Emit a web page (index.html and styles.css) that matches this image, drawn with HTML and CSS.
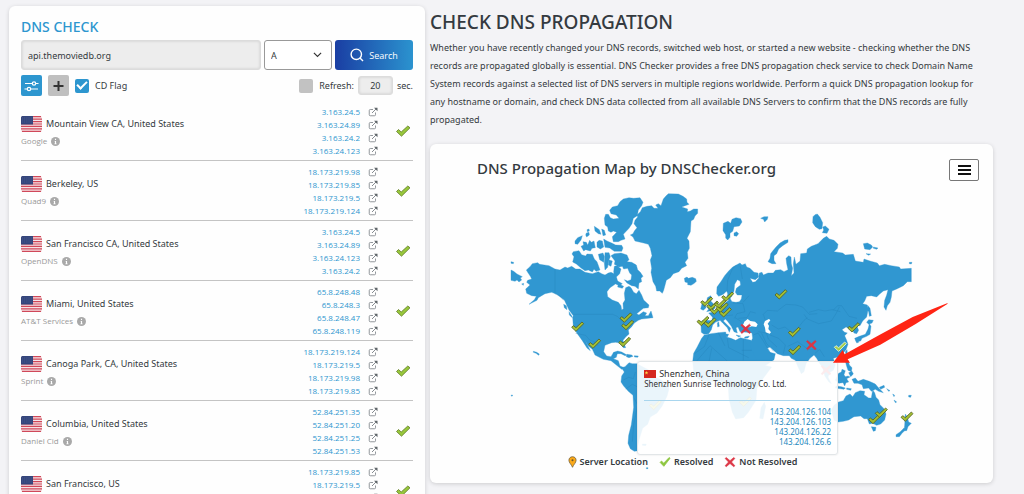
FILE: index.html
```html
<!DOCTYPE html>
<html lang="en">
    <head>
        <meta charset="UTF-8">
        <meta name="viewport" content="width=device-width, initial-scale=1">
        <title>DNS Check</title>
        <link rel="stylesheet" href="styles.css">
    </head>
    <body>
        <svg class="sprite" aria-hidden="true">
            <symbol id="flag-us" viewBox="0 0 21 16">
                <rect width="21" height="16" rx="1.5" fill="#f6e4e6"/>
                <path d="M1 .7h19M0 3.2h21M0 5.6h21M0 8h21M0 10.4h21M0 12.8h21M1 15.3h19" stroke="#d0485a" stroke-width="1.2"/>
                <path d="M1.5 0H12v8.5H0v-7A1.5 1.5 0 0 1 1.500 0z" fill="#33457b"/>
                <path d="M1 2h11M1 4h11M1 6h11" stroke="#6c7cab" stroke-width=".6" stroke-dasharray=".7 1.200"/>
            </symbol>
            <symbol id="info" viewBox="0 0 16 16">
                <circle cx="8" cy="8" r="8" fill="#a9a9a9"/>
                <path d="M6.500 7H9v4.500h1V13H6v-1.500h1V8.500h-.5zM7 3h2v2.300H7z" fill="#fff"/>
            </symbol>
            <symbol id="external" viewBox="0 0 20 20">
                <path d="M10 5H4.500Q2.500 5 2.500 7v8.500q0 2 2 2H13q2 0 2-2V11" fill="none" stroke="#868b90" stroke-width="1.800"/>
                <path d="M8 12l8.500-8.500" stroke="#868b90" stroke-width="2"/>
                <path d="M12 1.500h7v7z" fill="#5f6569"/>
            </symbol>
            <symbol id="tick" viewBox="-8 -7 16 14">
                <path d="M-6.500 .5l2-2 2.700 2.500L4.800-5l2.200 1.800L-1.500 5.200z" fill="#98c73c" stroke="#5f7b26" stroke-width=".8"/>
            </symbol>
            <symbol id="tick-map" viewBox="-21 -18 42 36">
                <path d="M-17 2l5-5 8 6L14-14l5 5L-4 14z" fill="#a3bf33" stroke="#566222" stroke-width="2.500"/>
            </symbol>
            <symbol id="tick-active" viewBox="-21 -18 42 36">
                <path d="M-17 2l5-5 8 6L14-14l5 5L-4 14z" fill="#a5cf4a" stroke="#f1f8df" stroke-width="2.500"/>
            </symbol>
            <symbol id="tick-plain" viewBox="-8 -7 16 14">
                <path d="M-6.500 .5l1.800-1.800 3 2.800L5.500-6l1.300 1L-1.500 5.800z" fill="#8dc63f" stroke="#8dc63f"/>
            </symbol>
            <symbol id="cross" viewBox="-8 -8 16 16">
                <path d="M-5-6L0-1.800 5-6 6.500-4.700 2 0 6.500 5 5 6.300 0 2-5 6.300-6.500 5-2 0-6.500-4.700z" fill="#dc3545" stroke="#dc3545" stroke-width=".8"/>
            </symbol>
        </svg>

        <main class="page">
            <section class="card checker">
                <h2 class="checker__title">DNS CHECK</h2>
                <form class="form">
                    <div class="form__row">
                        <input class="field form__host" type="text" value="api.themoviedb.org" aria-label="Host name">
                        <span class="form__type">
                            <select class="form__select" aria-label="Record type">
                                <option>A</option>
                                <option>AAAA</option>
                                <option>CNAME</option>
                                <option>MX</option>
                            </select>
                            <svg class="form__chevron" viewBox="0 0 10 6" aria-hidden="true"><path d="M1 1l4 4 4-4" fill="none" stroke="#333" stroke-width="1.300"/></svg>
                        </span>
                        <button class="form__search" type="button">
                            <svg class="form__lens" viewBox="0 0 14 14" aria-hidden="true"><circle cx="6.300" cy="6.300" r="5.200" fill="none" stroke="#fff" stroke-width="1.400"/><path d="M10 10l3 3" stroke="#fff" stroke-width="1.400"/></svg>
                            Search
                        </button>
                    </div>
                    <div class="form__row form__row--options">
                        <button class="square square--blue" type="button" aria-label="Settings">
                            <svg viewBox="0 0 15 12" aria-hidden="true"><g fill="none" stroke="#fff" stroke-width="1.200"><path d="M1 3.500h7M12 3.500h2.500M.5 9h2.500M7 9h7"/><circle cx="10" cy="3.500" r="1.700"/><circle cx="5" cy="9" r="1.700"/></g></svg>
                        </button>
                        <button class="square" type="button" aria-label="Add">
                            <svg viewBox="0 0 15 12" aria-hidden="true"><path d="M7.500 1v10M2.500 6h10" stroke="#333" stroke-width="2"/></svg>
                        </button>
                        <label class="option"><input class="option__box" type="checkbox" checked>CD Flag</label>
                        <div class="refresh">
                            <label class="option"><input class="option__box" type="checkbox">Refresh:</label>
                            <input class="field refresh__seconds" id="seconds" type="text" value="20">
                            <label for="seconds">sec.</label>
                        </div>
                    </div>
                </form>
                <ul class="servers" data-servers></ul>
            </section>

            <div class="content">
                <h1 class="content__title">CHECK DNS PROPAGATION</h1>
                <p class="content__text">Whether you have recently changed your DNS records, switched web host, or started a new website - checking whether the DNS records are propagated globally is essential. DNS Checker provides a free DNS propagation check service to check Domain Name System records against a selected list of DNS servers in multiple regions worldwide. Perform a quick DNS propagation lookup for any hostname or domain, and check DNS data collected from all available DNS Servers to confirm that the DNS records are fully propagated.</p>

                <section class="card map">
                    <header class="map__header">
                        <h2 class="map__title">DNS Propagation Map by DNSChecker.org</h2>
                        <button class="map__menu" type="button" aria-label="Map menu"><span></span><span></span><span></span></button>
                    </header>
                    <div class="map__stage">
                        <!-- three map units to a pixel -->
                        <svg class="map__svg" viewBox="18 18 1206 786" role="img" aria-label="World map">
                            <g class="land">
                                <!-- North America -->
                                <path d="M68 262L64 255 75 245 82 236 98 233 104 238 118 240 132 242 150 252 165 255 180 246 188 249 200 244 212 252 225 252 240 262 262 266 280 260 290 266 300 270 310 264 318 262 330 268 335 285 330 298 315 308 306 320 308 335 322 345 340 352 348 362 350 374 355 372 354 355 360 345 358 325 362 308 372 304 378 308 386 322 394 326 402 316 410 330 416 345 432 360 430 368 415 370 395 386 402 390 415 380 425 384 420 392 430 392 438 378 444 398 430 400 410 402 400 406 388 414 380 425 370 435 372 447 362 456 354 466 358 478 362 488 355 488 345 474 332 472 320 473 300 481 296 500 305 513 318 515 325 503 338 502 334 517 325 521 340 527 345 543 358 548 350 553 335 541 318 527 295 523 270 510 262 493 250 483 240 465 256 497 246 489 232 467 215 443 205 425 203 397 205 392 192 375 178 345 155 328 140 322 120 326 100 338 96 346 72 358 88 344 94 334 80 332 65 325 62 312 75 300 65 292 68 286 80 282 76 274z"/>
                                <path d="M18 255l8 4 10 8 16 8-6 4 4 6-8 6-6-6-6 4-12-3zM18 230l8 2-1 4-7-1zM50 297l6-2-1 6zM176 358l8 4 2 12-8-6zM192 380l8 12 2 6-9-8z"/>
                                <path d="M345 50L355 42 372 38 386 40 405 38 414 52 410 62 400 75 397 92 385 100 381 116 372 130 355 148 360 162 348 166 340 170 325 170 322 155 335 142 325 138 318 142 310 138 308 126 300 120 298 100 302 88 310 88 316 98 325 102 342 100 334 90 318 86 314 76 322 66 338 62z"/>
                                <path d="M205 200l17-3 8 12 12 4 4-6 16 1 6 14 8 8 9 25-12 4-6-6-5 8-12-6-10 2-12-8-14-12-11-6 4-16-6-8zM210 168l8-10 14-6-4 13-10 13-8-2zM228 184l8-4-2-10 10 2 4 8 6-14 5 6 8-4 4 20-10 2-5 8-14-4-6 4zM242 150l2-6 8-2 1 8-8 6zM246 134l6-2 1 6-6 2zM268 124l15 10 5 14-8-2-10-8zM290 132l8 4 4 14-8 2zM276 172l6-6 10 2 4 18-10 6-10-6zM296 162l10 6 14 6 12 6 18 1 4 8-4 10-22 0-14-10-14-2zM280 208l14-4 4 10-2 18-12-8zM300 203l12 0 4 12-6 14-2 18-8 8-2-20z"/>
                                <path d="M318 212l10-6 20-2 18 6 6 14-6 6 14 2 14 8 4 14 8 8 8 12-6 6 2 10-8 4-2 18-10-8-10-2-14-8-8-10 10 4 10-4 2-14-6-6-6-14-12 2-4-8-10 2-14-8 2-10zM328 244l8-2 12 10-4 14-10 10 4 12 14 8-8 6-14-6-8-12 6-10-2-14zM340 296l16 8-4 6-14-4zM310 224l12 4-4 16-8-4z"/>
                                <path d="M376 150L384 146 388 138 396 128 387 116 390 106 398 96 396 90 406 80 412 68 426 64 440 62 447 70 459 70 452 60 460 56 468 62 475 42 482 34 490 26 520 27 534 34 545 42 546 52 552 58 540 62 530 66 548 72 547 80 556 78 566 72 578 72 578 85 570 93 566 103 558 108 556 140 546 160 552 168 553 190 547 202 549 220 540 232 545 242 530 250 522 260 505 266 496 278 484 286 476 316 472 325 464 318 455 318 452 304 444 290 438 262 440 250 436 225 441 212 436 190 430 178 416 174 390 168 384 156z"/>
                                <path d="M538 280l8-4 4 4 12-3 10 4 2 8-6 6-10 6-10-2 0-6-8-2zM404 390l10-6 6 8-12 4zM326 502l12-4 12 3 16 9-6 2-12-6-22 0zM366 508l14 2 4 4-12 4-8-3zM388 512l12 1-2 4-10-1zM85 499l10 3 8 5-2 4-8-6-8-3zM18 630l6 1-4 3z"/>
                                <!-- South America -->
                                <path d="M350 549L360 545 372 533 382 536 396 536 410 544 430 554 446 574 470 586 490 598 492 612 486 634 471 664 456 684 436 696 428 718 413 730 406 752 402 765 398 785 400 797 388 799 376 791 369 775 371 751 379 719 386 667 384 631 370 619 356 603 348 591 350 573 358 561z"/>
                                <path d="M412 777l12 0-2 5-10-1zM424 848l5 0 0 3-5 0z"/>
                                <!-- Africa -->
                                <path d="M563 530L566 505 577 485 590 460 598 450 618 446 640 443 662 441 664 456 678 460 692 466 706 458 738 466 741 482 750 506 762 524 775 540 800 546 775 580 756 610 753 646 730 682 716 698 692 702 682 682 672 642 670 608 646 588 612 590 580 582 566 560zM768 668l10-16 4 12-8 38-10-2z"/>
                            </g>
                            <g class="land" transform="translate(555 0)">
                                <!-- Eurasia -->
                                <path d="M33 420L35 408 45 405 65 407 68 397 56 384 68 382 78 374 88 366 98 360 108 352 116 346 111 334 116 322 122 326 121 342 126 350 138 352 148 350 154 342 156 330 142 330 136 322 139 310 152 300 150 288 142 284 134 298 132 318 124 336 116 334 110 318 100 328 86 334 80 326 81 306 94 288 104 272 116 258 128 246 150 234 156 240 166 236 170 246 180 250 192 262 204 264 206 276 196 284 180 280 188 292 196 290 206 280 208 264 216 262 220 270 234 264 250 264 256 256 272 254 282 260 294 254 290 236 288 220 296 212 303 216 304 236 308 250 304 272 312 264 310 236 313 216 318 238 330 228 332 206 350 204 352 192 364 184 384 176 400 160 410 154 418 162 432 166 444 178 442 190 432 200 458 204 466 210 490 208 496 228 520 232 522 222 540 228 562 234 568 242 584 238 604 242 628 246 632 252 664 250 664 290 652 290 640 302 628 308 620 312 606 318 604 336 600 352 592 362 588 376 582 366 584 346 590 330 594 314 580 318 570 326 560 336 544 332 530 334 524 348 518 356 532 360 534 376 530 396 518 408 510 422 500 422 506 436 500 446 492 444 486 432 476 430 468 426 456 434 464 442 472 444 464 452 470 466 474 478 468 494 456 508 444 516 430 520 436 540 430 556 420 562 414 576 424 596 416 590 404 572 398 548 388 534 380 520 372 510 360 520 348 536 342 560 334 566 324 546 316 526 304 520 298 512 280 512 262 506 240 486 232 490 240 502 256 506 252 524 232 538 214 548 204 534 192 510 178 478 188 460 186 444 170 442 150 440 144 426 138 428 142 444 132 440 124 424 112 408 106 402 100 408 112 420 122 430 118 442 112 428 98 414 90 406 76 412 68 420 64 434 56 446 42 448 34 442z"/>
                                <path d="M52 338l10-6 4 8-4 8 8 8 6 12-8 8-18 4 6-8-4-4 4-8-6-8zM36 356l10-2 2 14-8 8-8-4zM82 414l4-4 2 14-5 2zM102 446l14 2-4 8-8-2zM164 456l14-3-4 6-10 1zM138 450l14 3-6 3z"/>
                                <path d="M100 115l14-6 8 6 4-12 12-5 14 3 4 10-8 12-16 2-4 14-8 6 0 12-7 8-6-6 0-10-8-12zM132 144l8-4 6 6-6 8-8-2zM212 100l10-5 12 0-2 8-8 8-4-8zM234 230l6-10 2-14 6-8 10-12 12-12 14-8 10-2 0 8-16 10-12 10-6 14-8 6 0 14 6 10-12 0zM369 95l6-6 7-2 8 10 8 16-2 18-8 2-12-8-8-12zM398 126l8-3 11 10-6 12-14-2 4-8zM520 176l12-2 12 6 4 6-8 8-16-2zM550 186l14 3-4 4-10-3zM528 206l14 1-6 4zM658 232l8 0-2 5-6-1z"/>
                                <path d="M534 362l6 8 4 22-6 2-2-14-6-8zM536 404l14 2-4 8-10 4-6-6zM538 416l5 8-3 24-10 6-14 6-4 8-14 2-4-10 14-6 18-6 8-16zM498 464l6-2 2 10-6 2zM466 500l5-6 1 10-4 6z"/>
                            </g>
                            <g class="land" transform="translate(375 465)">
                                <!-- Oceania and the islands -->
                                <path d="M646 64l8-3 4 14 8 8-2 12-10-4-4-12zM656 98l10-4 4 8-8 8zM626 100l8-4 2-8 10 4-4 12 6 10-10 14-12 2-10-10zM640 112l14-4 6 3-10 5 6 10-8 2-4 10-6-12zM618 138l16 2 12 4-4 4-26-4zM650 144l14 2-2 5-12-3zM666 118l10-4 8 10 16-6 18 6 18 8 10 12 14 14-14-4-10-6-12 6-8-10-16 2-4-12-12-4-12 0zM748 142l14-6 2 6-12 6zM770 146l10 6-4 2zM788 162l6 4-2 4zM792 180l8 6-4 2zM836 166l8 0-2 6-6-1z"/>
                                <path d="M604 210L612 196 626 186 640 182 648 168 660 162 668 170 676 158 690 152 704 154 702 164 716 174 724 174 728 150 734 158 738 172 746 180 750 194 762 206 768 222 764 240 752 252 740 256 728 250 718 252 712 236 702 236 692 228 672 230 656 240 640 244 624 246 612 240zM724 260l14 2-2 10-6 2zM826 222l6 10 4 14 8 4-10 10-4 12-8 0 2-16zM822 264l4 6-10 10-8 10-10 0 0-6 12-8z"/>
                            </g>
                            <!-- inland seas -->
                            <path class="sea" d="M714 420l4-10 10-8 8 6 14 2 8 8-4 8-14-2-12 4-12-2zM780 408l12-6 4 4-8 10 4 6-2 10 8 10-4 4-12-4-2-14-4-10z"/>
                            <!-- borders -->
                            <g class="border">
                                <path d="M150 252v74l14 6 12 14M205 388h118l14 6 14 14 18-8 10-8M212 445l30 6 12 14 16 6 10 12M355 585l16-8 14 4 6-20M362 612l20-14 20 10M388 640l10 20-12 60-4 50"/>
                                <path d="M570 505l28-20 14-36M575 528l40-46 52 46M667 460l4 28 60 30M715 462v64M740 496h-30M612 530l8-40M640 443l20 40M745 450l14-6 16 24 24 40M770 445l14 30 22 24"/>
                                <path d="M666 320l2-34 14-34 12-12M712 282l-6-38M615 385l16 18M650 370l14 22 20-2M684 354l30 2 6 24-24 6-8 14M700 400l26-2 10-18 16 4M714 352l18-20M775 388l12-12 30 2 26-20 30 2 20 6 20 22 24-2M775 388l6 18M800 420l20 12 20-6 24 20M795 450l26 10 20 20-6 26M897 388l10 14 34 14 38-8 14-22 10-20M912 382l28-8 20 4 22-4 24 6M984 376l14-14 12 0 22 32 24 6M865 446l16-20 16-20 10-8M848 484l30-14 30 22 30 2M930 505l14-12 14 22M760 440l24 4 6 18 26 24M690 398l20 12"/>
                            </g>
                            <g data-markers></g>
                        </svg>
                        <div class="tip">
                            <p class="tip__place">
                                <svg class="tip__flag" viewBox="0 0 12 8" aria-hidden="true"><rect width="12" height="8" fill="#d5281f"/><path d="M2.500 1l.5 1.300h1.300l-1 .8.4 1.300-1.200-.8-1.200.8.4-1.300-1-.8H2z" fill="#ffd84a"/></svg>
                                Shenzhen, China
                            </p>
                            <p class="tip__owner">Shenzhen Sunrise Technology Co. Ltd.</p>
                            <ul class="tip__list">
                                <li>143.204.126.104</li>
                                <li>143.204.126.103</li>
                                <li>143.204.126.22</li>
                                <li>143.204.126.6</li>
                            </ul>
                        </div>
                        <svg class="map__svg map__svg--over" viewBox="18 18 1206 786" aria-hidden="true">
                            <path d="M984 533L1013 495l6 13 104-58 100-54 105-42-1 3-95 60-106 62-98 44 7 10z" fill="#ff2414"/>
                        </svg>
                    </div>
                    <ul class="legend">
                        <li class="legend__item"><svg class="legend__pin" viewBox="0 0 9 12" aria-hidden="true"><path d="M4.500 .7C2.300.7.900 2.300.900 4.300c0 2.400 2.500 4.200 3.600 7 1.100-2.800 3.600-4.600 3.600-7C8.100 2.300 6.700.7 4.500.7z" fill="#fba919" stroke="#66552f" stroke-width=".7"/><circle cx="4.500" cy="4.200" r="1" fill="#66552f"/></svg>Server Location</li>
                        <li class="legend__item"><svg class="legend__icon" aria-hidden="true"><use href="#tick-plain"/></svg>Resolved</li>
                        <li class="legend__item"><svg class="legend__icon" aria-hidden="true"><use href="#cross"/></svg>Not Resolved</li>
                    </ul>
                </section>
            </div>
        </main>
        <script src="script.js"></script>
    </body>
</html>
```
FILE: styles.css
```css
:root{
    --blue: #2d96cf;
    --text: #343a40;
    --line: #c4c4c4;
}

*{
    box-sizing: border-box;
}

html, body{
    margin: 0;
}

body{
    background-color: #f3f3f6;
    color: var(--text);
    font-family: "Noto Sans", "Open Sans", sans-serif;
    font-size: 9px;
}

h1, h2, p, ul{
    margin: 0;
    padding: 0;
}

ul{
    list-style: none;
}

input, select, button{
    font: inherit;
    color: inherit;
}

button{
    border: 0;
    padding: 0;
    cursor: pointer;
}

.sprite{
    position: absolute;
    width: 0;
    height: 0;
}

.page{
    display: grid;
    grid-template-columns: minmax(0, 416fr) minmax(0, 563fr);
    align-items: start;
    gap: 5px;
    padding: 6px 31px 0 9px;
}

.card{
    background-color: #fefefe;
    border-radius: 6px;
    box-shadow: 0 1px 4px rgba(0, 0, 0, .16);
}

/* left card */
.checker{
    padding: 11px 12px;
}

.checker__title{
    color: var(--blue);
    font-size: 14px;
    font-weight: 500;
    line-height: 20px;
}

.form{
    margin-top: 3px;
}

.form__row{
    display: flex;
    align-items: center;
    gap: 3px;
}

.form__row--options{
    gap: 6px;
    margin-top: 5px;
}

.field{
    min-width: 0;
    border: 1px solid #dcdcdc;
    border-radius: 3px;
    background-color: #ededed;
    box-shadow: inset 0 0 3px rgba(0, 0, 0, .15);
}

.form__host{
    flex: 1;
    height: 30px;
    padding: 0 6px;
}

.form__type{
    display: grid;
    align-items: center;
    width: 68px;
}

.form__select{
    grid-area: 1 / 1;
    appearance: none;
    width: 100%;
    height: 30px;
    padding: 0 6px;
    border: 1px solid #999;
    border-radius: 3px;
    background-color: #fff;
}

.form__chevron{
    grid-area: 1 / 1;
    justify-self: end;
    width: 9px;
    margin-right: 10px;
    pointer-events: none;
}

.form__search{
    display: flex;
    align-items: center;
    justify-content: center;
    gap: 5px;
    width: 78px;
    height: 30px;
    border-radius: 3px;
    background-image: linear-gradient(90deg, #1a3ea3, #2b93cf);
    color: #fff;
    font-family: "Open Sans", sans-serif;
}

.form__lens{
    width: 14px;
    height: 14px;
}

.square{
    display: grid;
    place-items: center;
    width: 21px;
    height: 21px;
    border-radius: 2px;
    background-color: #bfbfbf;
}

.square svg{
    width: 15px;
    height: 12px;
}

.square--blue{
    background-color: var(--blue);
}

.option{
    display: flex;
    align-items: center;
    gap: 6px;
}

.option__box{
    appearance: none;
    display: grid;
    place-items: center;
    width: 14px;
    height: 14px;
    margin: 0;
    border-radius: 2px;
    background-color: #c2c2c2;
}

.option__box:checked{
    background-color: var(--blue);
}

.option__box:checked::before{
    content: "";
    width: 8px;
    height: 4px;
    margin-bottom: 3px;
    border: solid #fff;
    border-width: 0 0 2px 2px;
    rotate: -45deg;
}

.refresh{
    display: flex;
    align-items: center;
    gap: 4px;
    margin-left: auto;
}

.refresh__seconds{
    width: 35px;
    height: 19px;
    padding: 0;
    text-align: center;
}

.servers{
    margin-top: 5px;
}

.server{
    display: flex;
    align-items: center;
    padding: 4px 0 3px;
    border-bottom: 1px solid var(--line);
}

.server__info{
    flex: 1;
}

.server__place{
    display: flex;
    align-items: center;
    gap: 4px;
    padding-top: 1px;
    line-height: 18px;
}

.server__flag{
    width: 21px;
    height: 16px;
}

.server__owner{
    display: flex;
    align-items: center;
    gap: 4px;
    margin-top: 1px;
    color: #999;
    font-family: "Open Sans", sans-serif;
    font-size: 8px;
    line-height: 14px;
}

.server__more{
    width: 9px;
    height: 9px;
}

.server__ip{
    display: flex;
    align-items: center;
    justify-content: flex-end;
    gap: 8px;
    color: var(--blue);
    font-family: "Open Sans", sans-serif;
    font-size: 8px;
    line-height: 13px;
    text-decoration: none;
}

.server__out{
    width: 10px;
    height: 10px;
}

.server__state{
    width: 16px;
    height: 14px;
    margin: 0 2px 0 17px;
}

/* right column */
.content__title{
    padding-top: 3px;
    font-size: 19px;
    font-weight: 500;
    line-height: 26px;
}

.content__text{
    margin-top: 4px;
    padding-right: 8px;
    line-height: 18px;
}

.map{
    margin-top: 15px;
    padding: 15px 14px 15px;
}

.map__header{
    display: flex;
    align-items: flex-start;
    justify-content: space-between;
    padding-left: 33px;
}

.map__title{
    font-size: 15px;
    font-weight: 500;
    line-height: 18px;
}

.map__menu{
    display: grid;
    place-content: center;
    gap: 2px;
    width: 30px;
    height: 22px;
    border: 1px solid #777;
    border-radius: 2px;
    background-color: #fff;
}

.map__menu span{
    width: 13px;
    height: 2px;
    background-color: #111;
}

.map__stage{
    position: relative;
    max-width: 402px;
    margin: 10px auto 0;
}

.map__svg{
    display: block;
    width: 100%;
    overflow: visible;
}

.map__svg--over{
    position: absolute;
    top: 0;
    left: 0;
    pointer-events: none;
}

.land{
    fill: #3097d1;
    stroke: #3097d1;
    stroke-width: 1;
    stroke-linejoin: round;
}

.sea{
    fill: #fefefe;
}

.border{
    fill: none;
    stroke: #217eb7;
    stroke-width: 1;
}

/* hover card of the selected server */
.tip{
    position: absolute;
    top: 65%;
    left: 31.500%;
    width: 50%;
    padding: 7px 6px;
    border: 1px solid #e2e6e8;
    border-radius: 3px;
    background-color: rgba(255, 255, 255, .9);
    box-shadow: 0 0 2px rgba(0, 0, 0, .12);
    color: #333;
    font-size: 8px;
    line-height: 10px;
}

.tip__place{
    display: flex;
    align-items: center;
    gap: 3px;
    font-size: 9px;
}

.tip__flag{
    width: 12px;
    height: 8px;
}

.tip__list{
    margin-top: 11px;
    padding-top: 6px;
    border-top: 1px solid #a9d6ee;
    color: #1b87bd;
    text-align: right;
}

.legend{
    display: flex;
    justify-content: center;
    gap: 11px;
    margin-top: 2px;
    padding-right: 58px;
    font-weight: 600;
    line-height: 13px;
}

.legend__item{
    display: flex;
    align-items: center;
    gap: 3px;
}

.legend__icon{
    width: 12px;
    height: 12px;
}

.legend__pin{
    width: 9px;
    height: 12px;
}
```
FILE: script.js
```js
const servers = [
    { place: 'Mountain View CA, United States', owner: 'Google', ips: ['3.163.24.5', '3.163.24.89', '3.163.24.2', '3.163.24.123'] },
    { place: 'Berkeley, US', owner: 'Quad9', ips: ['18.173.219.98', '18.173.219.85', '18.173.219.5', '18.173.219.124'] },
    { place: 'San Francisco CA, United States', owner: 'OpenDNS', ips: ['3.163.24.5', '3.163.24.89', '3.163.24.123', '3.163.24.2'] },
    { place: 'Miami, United States', owner: 'AT&amp;T Services', ips: ['65.8.248.48', '65.8.248.3', '65.8.248.47', '65.8.248.119'] },
    { place: 'Canoga Park, CA, United States', owner: 'Sprint', ips: ['18.173.219.124', '18.173.219.5', '18.173.219.98', '18.173.219.85'] },
    { place: 'Columbia, United States', owner: 'Daniel Cid', ips: ['52.84.251.35', '52.84.251.20', '52.84.251.25', '52.84.251.53'] },
    { place: 'San Francisco, US', owner: 'Quad9', ips: ['18.173.219.85', '18.173.219.5', '18.173.219.98', '18.173.219.124'] }
];

// x and y in map units
const resolved = [
    [217, 425], [268, 476], [362, 398], [367, 420], [358, 471],
    [604, 350], [622, 362], [632, 374], [645, 356], [667, 335], [650, 368], [660, 382],
    [593, 408], [614, 413], [827, 328], [867, 441], [868, 495], [1045, 427],
    [1108, 702], [1128, 683], [1205, 695], [720, 650], [450, 660]
];
const active = [[1005, 485]];
const failed = [[722, 431], [919, 480], [963, 555]];

const icon = (name, className) => `<svg class="${className}" aria-hidden="true"><use href="#${name}"/></svg>`;

const renderServer = ({ place, owner, ips }) => `
    <li class="server">
        <div class="server__info">
            <p class="server__place">${icon('flag-us', 'server__flag')}${place}</p>
            <p class="server__owner">${owner}${icon('info', 'server__more')}</p>
        </div>
        <div>${ips.map(ip => `<a class="server__ip" href="#">${ip}${icon('external', 'server__out')}</a>`).join('')}</div>
        ${icon('tick', 'server__state')}
    </li>`;

const renderMarker = name => ([x, y]) => `<use href="#${name}" x="${x - 21}" y="${y - 18}" width="42" height="36"/>`;

document.querySelector('[data-servers]').innerHTML = servers.map(renderServer).join('');
document.querySelector('[data-markers]').innerHTML =
    resolved.map(renderMarker('tick-map')).join('') +
    active.map(renderMarker('tick-active')).join('') +
    failed.map(renderMarker('cross')).join('');
```
